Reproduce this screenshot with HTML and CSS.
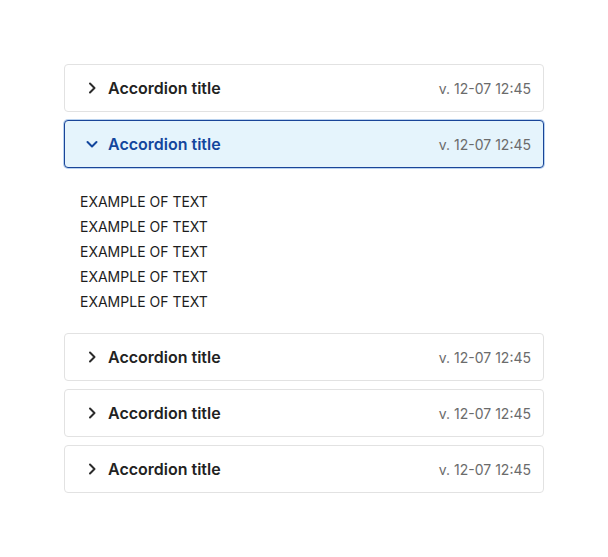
FILE: index.html
```html
<!DOCTYPE html>
<html>
<head>
<meta charset="utf-8">
<link rel="stylesheet" href="styles.css">
</head>
<body>
<div class="accordion">
  <div class="item">
    <div class="header">
      <svg class="chev" width="16" height="16" viewBox="0 0 16 16"><path d="M6 3.5 L10.5 8 L6 12.5" fill="none" stroke="currentColor" stroke-width="2" stroke-linecap="round" stroke-linejoin="round"/></svg>
      <span class="title">Accordion title</span>
      <span class="date">v. 12-07 12:45</span>
    </div>
  </div>
  <div class="item open">
    <div class="header">
      <svg class="chev" width="16" height="16" viewBox="0 0 16 16"><path d="M3.5 6 L8 10.5 L12.5 6" fill="none" stroke="currentColor" stroke-width="2" stroke-linecap="round" stroke-linejoin="round"/></svg>
      <span class="title">Accordion title</span>
      <span class="date">v. 12-07 12:45</span>
    </div>
    <div class="content">
      <p>EXAMPLE OF TEXT</p>
      <p>EXAMPLE OF TEXT</p>
      <p>EXAMPLE OF TEXT</p>
      <p>EXAMPLE OF TEXT</p>
      <p>EXAMPLE OF TEXT</p>
    </div>
  </div>
  <div class="item">
    <div class="header">
      <svg class="chev" width="16" height="16" viewBox="0 0 16 16"><path d="M6 3.5 L10.5 8 L6 12.5" fill="none" stroke="currentColor" stroke-width="2" stroke-linecap="round" stroke-linejoin="round"/></svg>
      <span class="title">Accordion title</span>
      <span class="date">v. 12-07 12:45</span>
    </div>
  </div>
  <div class="item">
    <div class="header">
      <svg class="chev" width="16" height="16" viewBox="0 0 16 16"><path d="M6 3.5 L10.5 8 L6 12.5" fill="none" stroke="currentColor" stroke-width="2" stroke-linecap="round" stroke-linejoin="round"/></svg>
      <span class="title">Accordion title</span>
      <span class="date">v. 12-07 12:45</span>
    </div>
  </div>
  <div class="item">
    <div class="header">
      <svg class="chev" width="16" height="16" viewBox="0 0 16 16"><path d="M6 3.5 L10.5 8 L6 12.5" fill="none" stroke="currentColor" stroke-width="2" stroke-linecap="round" stroke-linejoin="round"/></svg>
      <span class="title">Accordion title</span>
      <span class="date">v. 12-07 12:45</span>
    </div>
  </div>
</div>
</body>
</html>
```
FILE: styles.css
```css
html, body {
  margin: 0;
  padding: 0;
  background: #ffffff;
}
body {
  font-family: Inter, "Noto Sans", sans-serif;
  color: #222;
}
.accordion {
  width: 480px;
  margin: 64px 0 0 64px;
  display: flex;
  flex-direction: column;
  gap: 8px;
}
.header {
  height: 46px;
  border: 1px solid #e2e2e2;
  border-radius: 4px;
  display: flex;
  align-items: center;
  padding: 0 12px 0 19px;
  background: #fff;
}
.chev {
  color: #2b2b2b;
  flex: none;
  margin-right: 8px;
}
.title {
  font-size: 16px;
  font-weight: 600;
  color: #222;
  flex: 1;
}
.date {
  font-size: 14px;
  color: #6b6b6b;
}
.open .header {
  background: #e5f4fc;
  border-color: #1a4598;
  box-shadow: 0 0 0 1px #b9d2ef;
}
.open .chev, .open .title {
  color: #12469d;
}
.content {
  padding: 21px 16px 11px 16px;
}
.content p {
  margin: 0;
  font-size: 14px;
  line-height: 25px;
  color: #1d1d1d;
}
```
